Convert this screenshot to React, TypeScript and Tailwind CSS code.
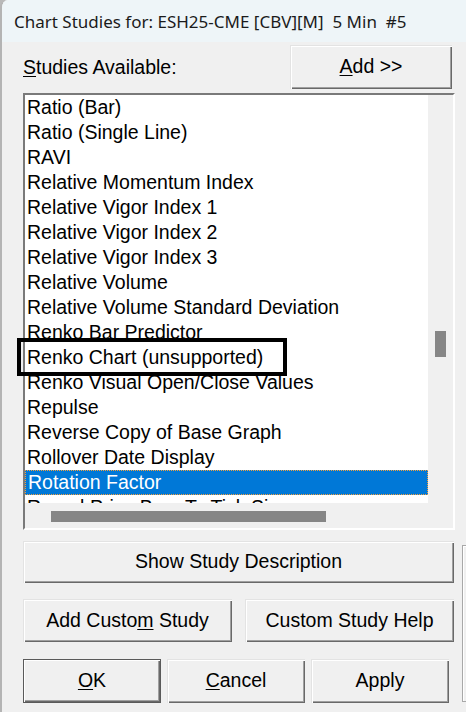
import React from 'react';
import clsx from 'clsx';

const studies = [
  'Ratio (Bar)',
  'Ratio (Single Line)',
  'RAVI',
  'Relative Momentum Index',
  'Relative Vigor Index 1',
  'Relative Vigor Index 2',
  'Relative Vigor Index 3',
  'Relative Volume',
  'Relative Volume Standard Deviation',
  'Renko Bar Predictor',
  'Renko Chart (unsupported)',
  'Renko Visual Open/Close Values',
  'Repulse',
  'Reverse Copy of Base Graph',
  'Rollover Date Display',
  'Rotation Factor',
  'Round Price Bars To Tick Size',
];

const selected = 'Rotation Factor';
const marked = 'Renko Chart (unsupported)';

const WinButton: React.FC<{ className?: string; isDefault?: boolean; children: React.ReactNode }> = ({
  className,
  isDefault,
  children,
}) => (
  <button
    className={clsx(
      'flex items-center justify-center bg-[#f0f0f0] text-black text-[19.5px] leading-none',
      isDefault
        ? 'border border-[#5a5a5a] shadow-[inset_1px_1px_0_#ffffff,inset_-1px_-1px_0_#696969,inset_-2px_-2px_0_#a0a0a0]'
        : 'shadow-[inset_1px_1px_0_#e3e3e3,inset_2px_2px_0_#ffffff,inset_-1px_-1px_0_#696969,inset_-2px_-2px_0_#a0a0a0]',
      className
    )}
  >
    {children}
  </button>
);

export default function App() {
  return (
    <div className="w-[466px] h-[712px] overflow-hidden bg-[#b9b9b9] font-['Liberation_Sans',Arial,sans-serif]">
      <div className="h-full flex flex-col bg-[#f0f0f0] border-l-2 border-[#b4b4b4] rounded-tl-[8px] overflow-hidden">
        {/* title bar */}
        <div className="h-[42px] shrink-0 bg-[#eef5f8] flex items-center pl-[12px] pt-[1px]">
          <span className="whitespace-pre text-[17px] text-[#1b1b1b] font-['Noto_Sans',sans-serif]">
            {'Chart Studies for: ESH25-CME [CBV][M]  5 Min  #5'}
          </span>
        </div>

        <div className="pl-[21px] flex flex-col">
          <div className="w-[432px] h-[47px] pt-[3px] flex items-end justify-between">
            <span className="text-[19.5px] leading-none text-black pb-[12px]">
              <span className="underline underline-offset-[2px]">S</span>tudies Available:
            </span>
            <WinButton className="w-[162px] h-[44px] mr-[3px]">
              <span className="underline underline-offset-[2px]">A</span>dd &gt;&gt;
            </WinButton>
          </div>

          {/* list box */}
          <div className="relative mt-[4px] w-[432px] h-[437px] border-2 border-t-[#7a7a7a] border-l-[#7a7a7a] border-b-[#ffffff] border-r-[#ffffff] flex flex-col">
            <div className="flex h-[408px]">
              <div className="w-[403px] bg-white overflow-hidden flex flex-col">
                {studies.map((s) => (
                  <div
                    key={s}
                    className={clsx(
                      'h-[25px] shrink-0 flex items-center pl-[2px] text-[19.5px] whitespace-nowrap leading-none',
                      s === selected
                        ? 'bg-[#0078d7] text-white border border-dotted border-[#f5a13c] pl-[1px]'
                        : 'text-black'
                    )}
                  >
                    {s}
                  </div>
                ))}
              </div>
              <div className="w-[25px] bg-[#f0f0f0] pt-[236px] pl-[7px]">
                <div className="w-[11px] h-[26px] bg-[#868686]" />
              </div>
            </div>
            <div className="flex h-[25px]">
              <div className="w-[403px] bg-[#f0f0f0] pt-[8px] pl-[26px]">
                <div className="w-[275px] h-[11px] bg-[#868686]" />
              </div>
              <div className="w-[25px] bg-[#f0f0f0]" />
            </div>
            {/* annotation box */}
            <div className="absolute left-[-8px] top-[243px] w-[270px] h-[38px] border-[4px] border-black pointer-events-none" />
          </div>

          <div className="flex">
            <div className="w-[432px] flex flex-col">
              <WinButton className="mt-[11px] w-[431px] h-[42px]">Show Study Description</WinButton>
              <div className="mt-[16px] flex gap-[13px]">
                <WinButton className="w-[209px] h-[43px]">
                  Add Custo<span className="underline underline-offset-[2px]">m</span>&nbsp;Study
                </WinButton>
                <WinButton className="w-[209px] h-[43px]">Custom Study Help</WinButton>
              </div>
              <div className="mt-[17px] flex gap-[6px]">
                <WinButton isDefault className="w-[138px] h-[44px]">
                  <span className="underline underline-offset-[2px]">O</span>K
                </WinButton>
                <WinButton className="w-[138px] h-[44px]">
                  <span className="underline underline-offset-[2px]">C</span>ancel
                </WinButton>
                <WinButton className="w-[138px] h-[44px]">Apply</WinButton>
              </div>
            </div>
            <div className="ml-[8px] mt-[15px] w-[4px] h-[157px] border-l border-y border-[#a8a8a8] shadow-[inset_1px_1px_0_#ffffff]" />
          </div>
        </div>
      </div>
    </div>
  );
}
